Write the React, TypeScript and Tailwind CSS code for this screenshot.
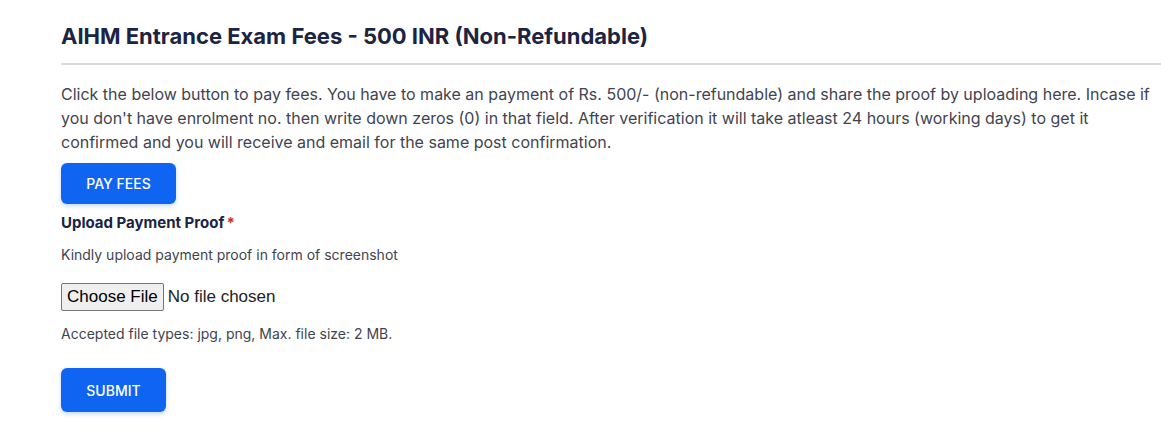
export default function App() {
  return (
    <div className="min-h-screen bg-white" style={{ fontFamily: "Inter, 'Noto Sans', sans-serif" }}>
      <div className="pl-[61px] pt-[21px]">
        {/* Header */}
        <h2 className="text-[22px] leading-[30px] font-bold text-[#1b2443]">
          AIHM Entrance Exam Fees - 500 INR (Non-Refundable)
        </h2>
        <div className="mt-[12px] h-[2px] bg-[#d9d9d9]" />

        {/* Description */}
        <p className="mt-[17px] pr-[8px] text-[16px] leading-[24px] text-[#3f4450]">
          Click the below button to pay fees. You have to make an payment of Rs. 500/- (non-refundable) and share the
          proof by uploading here. Incase if you don't have enrolment no. then write down zeros (0) in that field. After
          verification it will take atleast 24 hours (working days) to get it confirmed and you will receive and email
          for the same post confirmation.
        </p>

        <button
          type="button"
          className="block mt-[9px] w-[115px] h-[41px] rounded-[6px] bg-[#0f65f2] text-white text-[14px] font-medium uppercase shadow-[0_2px_4px_rgba(15,101,242,0.25)]"
        >
          Pay Fees
        </button>

        {/* Upload */}
        <div className="mt-[8px] flex items-center h-[22px] text-[15px] font-bold text-[#1b2443]">
          Upload Payment Proof<span className="ml-[2px] text-[#c9302c]">*</span>
        </div>
        <p className="mt-[11px] text-[14px] leading-[20px] text-[#3f4450]">
          Kindly upload payment proof in form of screenshot
        </p>

        <div className="mt-[21px] h-[22px] flex items-center">
          <input
            type="file"
            className="text-[17px] text-[#222] file:mr-[4px] file:px-[5px] file:py-[0px] file:border file:border-[#767676] file:rounded-[2px] file:bg-[#efefef] file:text-black"
            style={{ fontFamily: "'Liberation Sans', Arial, sans-serif" }}
          />
        </div>

        <p className="mt-[16px] text-[14px] leading-[20px] text-[#3f4450]">
          Accepted file types: jpg, png, Max. file size: 2 MB.
        </p>

        <button
          type="button"
          className="block mt-[24px] w-[105px] h-[44px] rounded-[6px] bg-[#0f65f2] text-white text-[14px] font-medium uppercase shadow-[0_2px_4px_rgba(15,101,242,0.25)]"
        >
          Submit
        </button>
      </div>
    </div>
  );
}
